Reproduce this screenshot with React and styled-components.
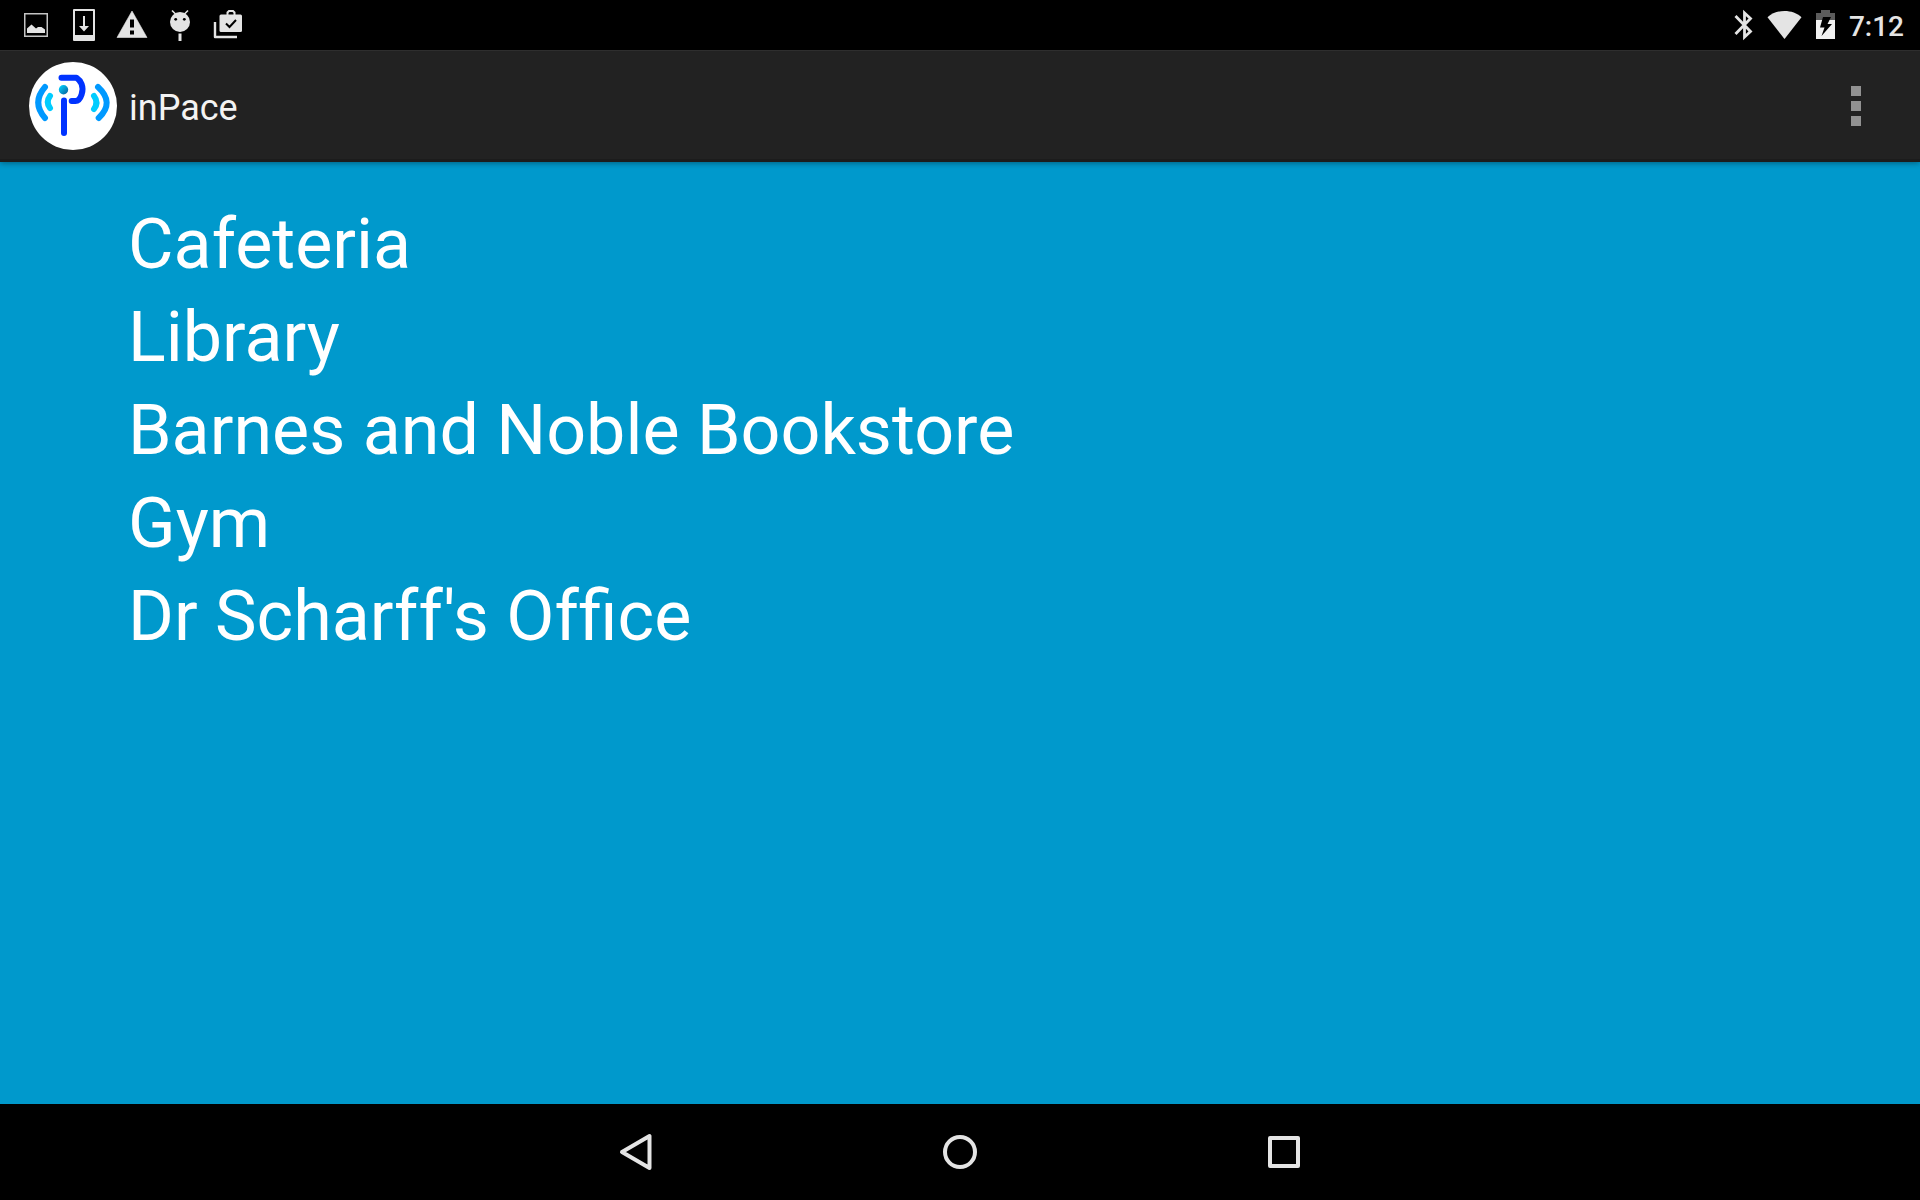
import React from "react";
import styled, { createGlobalStyle } from "styled-components";

const GlobalStyle = createGlobalStyle`
  *, *::before, *::after { box-sizing: border-box; }
  body { margin: 0; background: #0099cc; font-family: Roboto, "Noto Sans", sans-serif; }
  button { border: 0; padding: 0; background: none; color: inherit; font: inherit; cursor: pointer; }
  svg { display: block; flex: none; }
`;

const Screen = styled.div`
  display: flex;
  flex-direction: column;
  min-height: 100vh;
  background: #0099cc;
`;

const StatusBar = styled.div`
  display: flex;
  justify-content: space-between;
  align-items: center;
  height: 50px;
  padding: 0 16px 0 12px;
  background: #000;
  color: #e4e4e4;
`;

const IconRow = styled.div`
  display: flex;
  align-items: center;
`;

const Clock = styled.time`
  margin-left: 12px;
  padding-top: 4px;
  font-size: 28px;
  line-height: 32px;
  font-weight: 500;
`;

const ActionBar = styled.header`
  display: flex;
  align-items: center;
  gap: 12px;
  height: 112px;
  padding-left: 29px;
  background: #222;
  box-shadow: inset 0 1px #2e2e2e, inset 0 -3px #1c1c1c, 0 1px 6px rgba(0, 0, 0, 0.4);
`;

const Title = styled.h1`
  flex: 1;
  margin: 0;
  padding-top: 4px;
  color: #f3f3f3;
  font-size: 36px;
  line-height: 42px;
  font-weight: 400;
`;

const OverflowButton = styled.button`
  display: flex;
  flex-direction: column;
  align-items: center;
  justify-content: center;
  gap: 5px;
  width: 128px;
  height: 100%;
`;

const Dot = styled.span`
  width: 10px;
  height: 10px;
  background: #929292;
`;

const Places = styled.ul`
  flex: 1;
  margin: 0;
  padding: 36px 0;
  list-style: none;
`;

const Place = styled.button`
  display: block;
  width: 100%;
  padding: 0 128px;
  color: #fff;
  font-size: 70px;
  line-height: 93px;
  text-align: left;
`;

const NavBar = styled.nav`
  display: flex;
  justify-content: center;
  height: 96px;
  background: #000;
`;

const NavButton = styled.button`
  display: flex;
  align-items: center;
  justify-content: center;
  width: 324px;
  height: 100%;
`;

// The <wbr> keeps the first "f" out of the three-letter ligature.
const PLACES = [
  { id: "cafeteria", name: "Cafeteria" },
  { id: "library", name: "Library" },
  { id: "bookstore", name: "Barnes and Noble Bookstore" },
  { id: "gym", name: "Gym" },
  { id: "office", name: <>Dr Scharff's Of<wbr />fice</> },
];

const INK = "#e4e4e4";

const StatusIcon = ({ width = 48, children }) => (
  <svg width={width} height="50" viewBox={`0 0 ${width} 50`} fill={INK} aria-hidden="true">
    {children}
  </svg>
);

const Notifications = () => (
  <IconRow>
    <StatusIcon>
      <rect x="12.75" y="13.75" width="22.5" height="22.5" fill="none" stroke="#c4c4c4" strokeWidth="1.5" />
      <path d="M15 33v-4.500l4.500-4 4.500 4 2-1.500h3.500l3.500 2.500V33z" />
    </StatusIcon>
    <StatusIcon>
      <path fillRule="evenodd" d="M14 9h20a1 1 0 0 1 1 1v30a1 1 0 0 1-1 1H14a1 1 0 0 1-1-1V10a1 1 0 0 1 1-1zm1 2v24h18V11z" />
      <path d="M23 16h2v10h4l-5 5.500L19 26h4z" />
    </StatusIcon>
    <StatusIcon>
      <path d="M24 11 9 37.500h30z" stroke={INK} strokeWidth=".6" strokeLinejoin="round" />
      <path d="M22 19.500h4v8h-4zM22 30.500h4v4h-4z" fill="#000" />
    </StatusIcon>
    <StatusIcon>
      <circle cx="24" cy="22" r="10" />
      <path d="M16 10.500l4 4M32 10.500l-4 4" stroke={INK} strokeWidth="1.600" />
      <circle cx="19.700" cy="19.300" r="1.400" fill="#000" />
      <circle cx="28.300" cy="19.300" r="1.400" fill="#000" />
      <path d="M22.500 33.500h3V41h-3z" />
    </StatusIcon>
    <StatusIcon>
      <rect x="15.500" y="14.500" width="22.500" height="17.500" rx="1.500" />
      <path d="M23.500 15v-2.500l1.500-1.500h4l1.500 1.500V15" fill="none" stroke={INK} strokeWidth="2" />
      <path d="M11 22v15h22" fill="none" stroke={INK} strokeWidth="2.400" strokeLinejoin="round" />
      <path d="M22 23.500l3.500 3.500 6.500-7" fill="none" stroke="#000" strokeWidth="2" />
    </StatusIcon>
  </IconRow>
);

const SystemState = () => (
  <IconRow>
    <StatusIcon width={30}>
      <path
        d="M6.500 16 21.500 31.500 15.500 37V13L21.500 18.500 6.500 34"
        fill="none"
        stroke={INK}
        strokeWidth="2.800"
      />
    </StatusIcon>
    <StatusIcon width={48}>
      <path d="M25.500 39 8.500 17.300C13 13 19 11 25.500 11s12.500 2 17 6.300z" />
    </StatusIcon>
    <StatusIcon width={30}>
      <path d="M9 20v-7h5v-3h9v3h5v7z" fill="#5c5c5c" />
      <path d="M9 20h19v19H9z" fill="#f1f1f1" />
      <path d="M16 17h8l-3.500 7H25L14.500 36l3-8.500h-4.500z" fill="#000" />
    </StatusIcon>
    <Clock>7:12</Clock>
  </IconRow>
);

const Logo = () => (
  <svg width="88" height="88" viewBox="0 0 88 88" fill="none" strokeWidth="6" strokeLinecap="round" strokeLinejoin="round" role="img" aria-label="inPace logo">
    <defs>
      <linearGradient id="dot" x1="0" y1="0" x2="1" y2="1">
        <stop offset=".15" stopColor="#00c8f8" />
        <stop offset="1" stopColor="#0a5a96" />
      </linearGradient>
    </defs>
    <circle cx="44" cy="44" r="44" fill="#fff" />
    <g stroke="#0033ff">
      <path d="M32.500 15.700H47.500Q51 18 52.600 22Q54.500 27 52.600 32.500Q50.500 39 46.500 39H42.700" />
      <path d="M35 38.500V71" />
    </g>
    <circle cx="34.500" cy="27.700" r="4.700" fill="url(#dot)" />
    <g stroke="#0099ff">
      <path d="M16 25Q2.500 40.500 16 56" />
      <path d="M69 25Q86 40.500 69.700 56" />
    </g>
    <g stroke="#00ccff">
      <path d="M21 34Q16.500 40 21 46" />
      <path d="M65 34Q70 40.500 65 47" />
    </g>
  </svg>
);

const NavIcon = ({ children }) => (
  <svg width="48" height="48" viewBox="0 0 48 48" fill="none" stroke={INK} strokeWidth="4" strokeLinejoin="round" aria-hidden="true">
    {children}
  </svg>
);

export default function App() {
  return (
    <>
      <GlobalStyle />
      <Screen>
        <StatusBar>
          <Notifications />
          <SystemState />
        </StatusBar>
        <ActionBar>
          <Logo />
          <Title>inPace</Title>
          <OverflowButton aria-label="More options">
            <Dot />
            <Dot />
            <Dot />
          </OverflowButton>
        </ActionBar>
        <Places>
          {PLACES.map(({ id, name }) => (
            <li key={id}>
              <Place>{name}</Place>
            </li>
          ))}
        </Places>
        <NavBar>
          <NavButton aria-label="Back">
            <NavIcon>
              <path d="M10 24 37.500 8v32z" />
            </NavIcon>
          </NavButton>
          <NavButton aria-label="Home">
            <NavIcon>
              <circle cx="24" cy="24" r="15" />
            </NavIcon>
          </NavButton>
          <NavButton aria-label="Recent apps">
            <NavIcon>
              <rect x="10" y="10" width="28" height="28" />
            </NavIcon>
          </NavButton>
        </NavBar>
      </Screen>
    </>
  );
}
